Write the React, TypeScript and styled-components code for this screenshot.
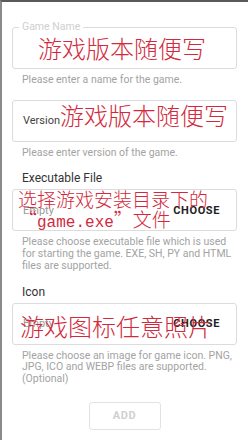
import React from "react";
import styled, { createGlobalStyle } from "styled-components";

const GlobalStyle = createGlobalStyle`
  html, body {
    margin: 0;
    padding: 0;
    background: #fff;
  }
  body {
    font-family: Roboto, "Noto Sans", Arial, sans-serif;
  }
`;

const Screen = styled.div`
  width: 248px;
  height: 440px;
  box-sizing: border-box;
  border-top: 2px solid #5a5a5a;
  border-left: 2px solid #8a8a8a;
  padding: 25px 11px 0 10px;
  overflow: hidden;
`;

const Field = styled.div<{ $gap?: number }>`
  position: relative;
  margin-top: ${(p) => p.$gap ?? 0}px;
`;

const Box = styled.div`
  position: relative;
  height: 42px;
  box-sizing: border-box;
  border: 1px solid #dcdcdc;
  border-radius: 3px;
  display: flex;
  align-items: center;
  justify-content: space-between;
  padding: 0 16px 0 10px;
`;

const Legend = styled.span`
  position: absolute;
  top: -7px;
  left: 6px;
  padding: 0 3px;
  background: #fff;
  font-size: 10.5px;
  line-height: 12px;
  color: #cfcfcf;
`;

const InnerLabel = styled.span<{ $muted?: boolean }>`
  font-size: 11px;
  color: ${(p) => (p.$muted ? "#9a9a9a" : "#444")};
`;

const Choose = styled.span`
  font-size: 11px;
  font-weight: 700;
  letter-spacing: 0.6px;
  color: #222;
`;

const Helper = styled.div`
  margin: 5px 0 0 10px;
  font-size: 10.5px;
  line-height: 11.7px;
  color: #a3a3a3;
  white-space: nowrap;
`;

const SectionLabel = styled.div`
  margin: 13px 0 4px 10px;
  font-size: 12px;
  line-height: 14px;
  color: #333;
`;

const Note = styled.div<{ $size: number; $left: number; $top: number }>`
  position: absolute;
  left: ${(p) => p.$left}px;
  top: ${(p) => p.$top}px;
  font-family: "Noto Sans CJK SC", "Noto Sans", sans-serif;
  font-weight: 300;
  font-size: ${(p) => p.$size}px;
  line-height: ${(p) => p.$size + 1}px;
  color: #d22a3c;
  white-space: nowrap;
  pointer-events: none;
`;

const Mono = styled.span`
  font-family: "Liberation Mono", "DejaVu Sans Mono", monospace;
  font-size: 16px;
`;

const ButtonRow = styled.div`
  display: flex;
  justify-content: center;
  margin-top: 17px;
`;

const AddButton = styled.button`
  width: 72px;
  height: 28px;
  background: #fff;
  border: 1px solid #e2e2e2;
  border-radius: 3px;
  font-family: Roboto, Arial, sans-serif;
  font-size: 11px;
  font-weight: 700;
  letter-spacing: 0.6px;
  color: #d0d0d0;
`;

export default function App() {
  return (
    <>
      <GlobalStyle />
      <Screen>
        <Field>
          <Box>
            <Legend>Game Name</Legend>
          </Box>
          <Note $size={24} $left={26} $top={8}>
            游戏版本随便写
          </Note>
        </Field>
        <Helper>Please enter a name for the game.</Helper>

        <Field $gap={14}>
          <Box>
            <InnerLabel>Version</InnerLabel>
          </Box>
          <Note $size={24} $left={48} $top={2}>
            游戏版本随便写
          </Note>
        </Field>
        <Helper>Please enter version of the game.</Helper>

        <SectionLabel>Executable File</SectionLabel>
        <Field>
          <Box>
            <InnerLabel $muted>Empty</InnerLabel>
            <Choose>CHOOSE</Choose>
          </Box>
          <Note $size={19} $left={6} $top={0}>
            选择游戏安装目录下的
            <br />
            “<Mono>game.exe</Mono>”文件
          </Note>
        </Field>
        <Helper>
          Please choose executable file which is used
          <br />
          for starting the game. EXE, SH, PY and HTML
          <br />
          files are supported.
        </Helper>

        <SectionLabel>Icon</SectionLabel>
        <Field>
          <Box>
            <InnerLabel $muted>Empty</InnerLabel>
            <Choose>CHOOSE</Choose>
          </Box>
          <Note $size={24} $left={8} $top={10}>
            游戏图标任意照片
          </Note>
        </Field>
        <Helper>
          Please choose an image for game icon. PNG,
          <br />
          JPG, ICO and WEBP files are supported.
          <br />
          (Optional)
        </Helper>

        <ButtonRow>
          <AddButton>ADD</AddButton>
        </ButtonRow>
      </Screen>
    </>
  );
}
